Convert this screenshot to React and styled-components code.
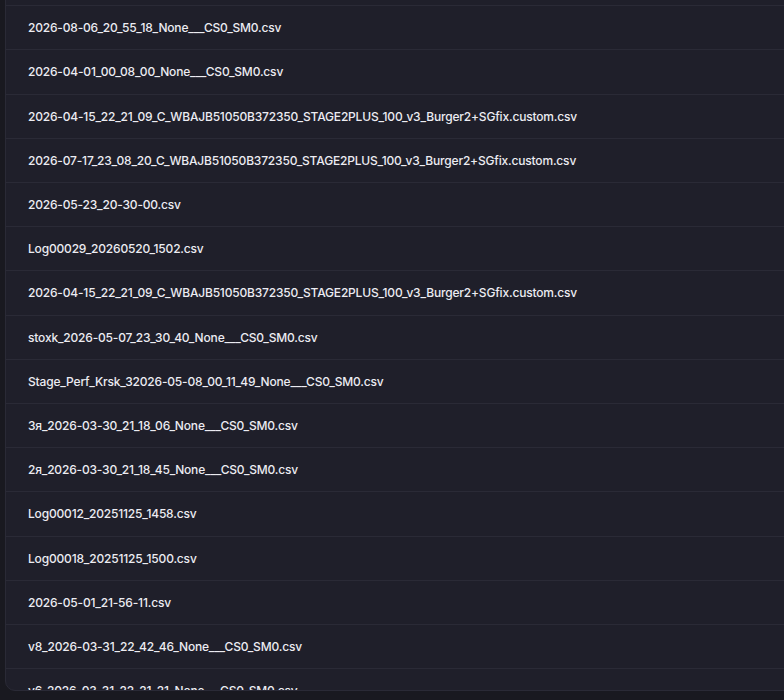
import React from "react";
import styled, { createGlobalStyle } from "styled-components";

const files = [
	"2026-07-02_19_40_12_None___CS0_SM0.csv",
	"2026-08-06_20_55_18_None___CS0_SM0.csv",
	"2026-04-01_00_08_00_None___CS0_SM0.csv",
	"2026-04-15_22_21_09_C_WBAJB51050B372350_STAGE2PLUS_100_v3_Burger2+SGfix.custom.csv",
	"2026-07-17_23_08_20_C_WBAJB51050B372350_STAGE2PLUS_100_v3_Burger2+SGfix.custom.csv",
	"2026-05-23_20-30-00.csv",
	"Log00029_20260520_1502.csv",
	"2026-04-15_22_21_09_C_WBAJB51050B372350_STAGE2PLUS_100_v3_Burger2+SGfix.custom.csv",
	"stoxk_2026-05-07_23_30_40_None___CS0_SM0.csv",
	"Stage_Perf_Krsk_32026-05-08_00_11_49_None___CS0_SM0.csv",
	"3я_2026-03-30_21_18_06_None___CS0_SM0.csv",
	"2я_2026-03-30_21_18_45_None___CS0_SM0.csv",
	"Log00012_20251125_1458.csv",
	"Log00018_20251125_1500.csv",
	"2026-05-01_21-56-11.csv",
	"v8_2026-03-31_22_42_46_None___CS0_SM0.csv",
	"v6_2026-03-31_22_21_21_None___CS0_SM0.csv",
	"v5_2026-03-31_22_02_10_None___CS0_SM0.csv",
];

const App = () => {
	return (
		<>
			<GlobalStyle />
			<Page>
				<FileList>
					{files.map((name, i) => (
						<FileRow key={i}>{name}</FileRow>
					))}
				</FileList>
			</Page>
		</>
	);
};

export default App;

const GlobalStyle = createGlobalStyle`
	html, body {
		margin: 0;
		height: 100%;
		overflow: hidden;
		background-color: #191920;
	}
	#root {
		height: 100%;
	}
`;

const Page = styled.div`
	box-sizing: border-box;
	height: 100%;
	padding: 0 0 9px 5px;
	display: flex;
	flex-direction: column;
	font-family: Inter, "Noto Sans", sans-serif;
`;

const FileList = styled.ul`
	flex: 1;
	margin: -39px -12px 0 0;
	padding: 0;
	list-style: none;
	overflow: hidden;
	background-color: #1f1f2a;
	border: 1px solid #2a2a36;
	border-radius: 10px;
`;

const FileRow = styled.li`
	padding: 14px 22px;
	font-size: 12px;
	font-weight: 500;
	letter-spacing: -0.18px;
	line-height: 15.2px;
	color: #ececf2;
	white-space: nowrap;
	border-bottom: 1px solid #2a2a36;
	cursor: pointer;

	&:hover {
		background-color: #252532;
	}
`;
